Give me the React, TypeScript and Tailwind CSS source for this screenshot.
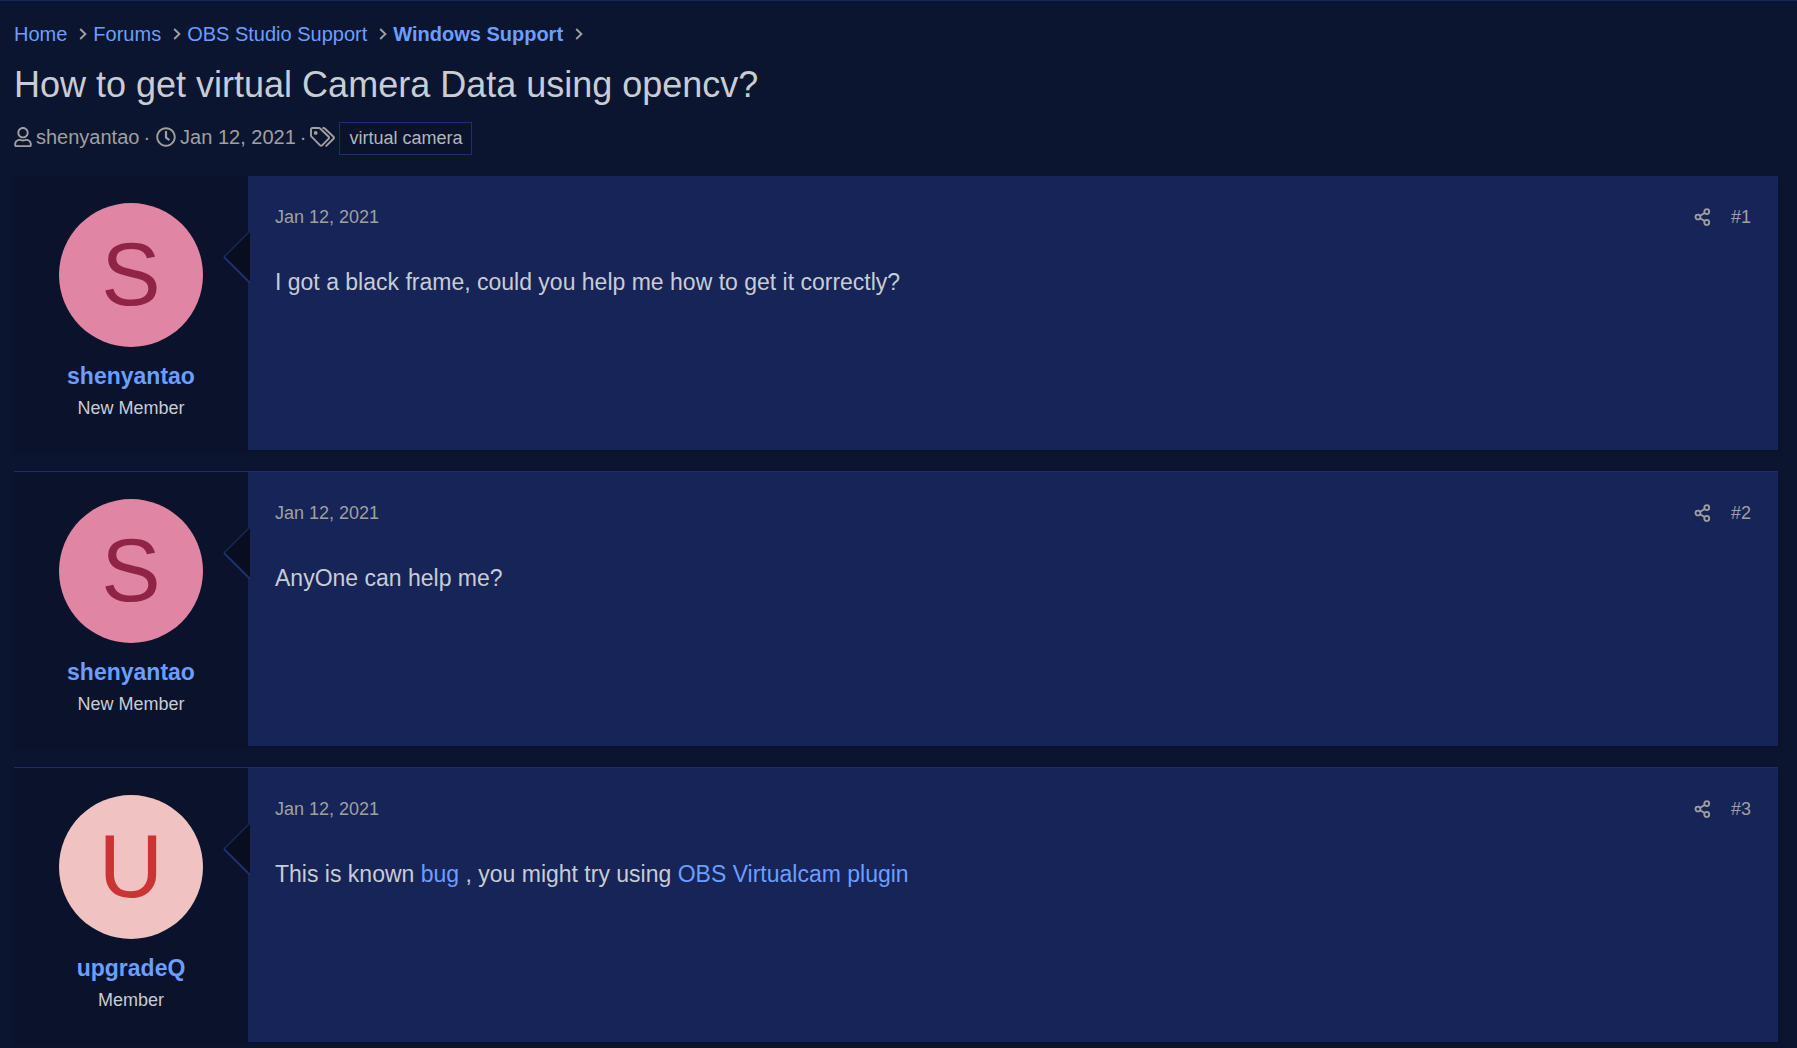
import React from "react";
import { FaRegClock, FaRegUser } from "react-icons/fa";

type Post = {
  id: number;
  author: string;
  rank: string;
  date: string;
  avatar: string;
  body: React.ReactNode;
};

const linkClass = "text-[#6b9eff] hover:underline";
const pink = "bg-[#e085a3] text-[#8f2446]";
const rose = "bg-[#f0c2c2] text-[#cc3333]";

const posts: Post[] = [
  {
    id: 1,
    author: "shenyantao",
    rank: "New Member",
    date: "Jan 12, 2021",
    avatar: pink,
    body: "I got a black frame, could you help me how to get it correctly?",
  },
  {
    id: 2,
    author: "shenyantao",
    rank: "New Member",
    date: "Jan 12, 2021",
    avatar: pink,
    body: "AnyOne can help me?",
  },
  {
    id: 3,
    author: "upgradeQ",
    rank: "Member",
    date: "Jan 12, 2021",
    avatar: rose,
    body: (
      <>
        This is known <a href="#bug" className={linkClass}>bug</a> , you might try using{" "}
        <a href="#plugin" className={linkClass}>OBS Virtualcam plugin</a>
      </>
    ),
  },
];

const crumbs = ["Home", "Forums", "OBS Studio Support", "Windows Support"];

function Chevron() {
  return (
    <svg viewBox="0 0 8 12" className="h-3 w-2" fill="none" stroke="#a0a0a0" strokeWidth="1.9" aria-hidden="true">
      <path d="M1.2 1 6.4 6 1.2 11" />
    </svg>
  );
}

function TagsIcon() {
  return (
    <svg viewBox="0 0 25 20" className="h-5 w-[25px]" fill="none" stroke="currentColor" strokeWidth="1.9" strokeLinejoin="round" aria-hidden="true">
      <path d="M1 2.3V8.6a1.6 1.6 0 0 0 .5 1.1l8.6 8.6a1.4 1.4 0 0 0 2 0l6.6-6.6a1.4 1.4 0 0 0 0-2L10.1 1.5A1.6 1.6 0 0 0 9 1H2.3A1.3 1.3 0 0 0 1 2.3Z" />
      <path d="M13.2 1h.5a1.6 1.6 0 0 1 1.1.5l8.7 8.2a1.4 1.4 0 0 1 0 2l-7.2 7.2" strokeLinecap="round" />
      <circle cx="5.7" cy="5.9" r="1.9" fill="currentColor" stroke="none" />
    </svg>
  );
}

function ShareIcon() {
  return (
    <svg viewBox="0 0 17 19" className="mb-0.5 h-[18px] w-[17px]" fill="none" stroke="currentColor" strokeWidth="1.9" aria-hidden="true">
      <circle cx="3.7" cy="9.5" r="2.6" />
      <circle cx="13" cy="3.8" r="2.6" />
      <circle cx="13" cy="15.2" r="2.6" />
      <path d="M6 8.100 10.700 5.200M6 10.900l4.700 2.900" />
    </svg>
  );
}

function PostCard({ post }: { post: Post }) {
  return (
    <article className="flex border-t border-[#1c3070] shadow-[0_2px_5px_rgba(0,0,0,0.2)] first:border-transparent">
      <section className="relative flex min-h-[274px] w-[234px] shrink-0 flex-col items-center bg-[#0a132b] pt-[27px]">
        <a
          href="#profile"
          aria-label={`${post.author} avatar`}
          className={`flex size-36 items-center justify-center rounded-full pb-0.5 text-[89px] leading-none ${post.avatar}`}
        >
          {post.author[0].toUpperCase()}
        </a>
        <h2 className="mt-3 text-[23px] leading-[34px] font-bold">
          <a href="#profile" className={linkClass}>{post.author}</a>
        </h2>
        <p className="text-[18px] leading-[30px] text-[#c8ccd4]">{post.rank}</p>
        <svg viewBox="0 0 27 54" className="absolute top-[54px] -right-0.5 h-[54px] w-[27px]" aria-hidden="true">
          <path d="M27 1 1 27l26 26Z" fill="#080e20" />
          <path d="M27 1 1 27" stroke="#182655" strokeWidth="1.5" />
          <path d="m1 27 26 26" stroke="#1c3070" strokeWidth="2" />
        </svg>
      </section>
      <section className="min-w-0 flex-1 bg-[#172457] px-[27px] pt-[27px]">
        <header className="flex items-center justify-between text-[18px] leading-[29px] text-[#a0a0a0]">
          <a href="#date">{post.date}</a>
          <div className="flex items-center gap-5">
            <button type="button" aria-label="Share"><ShareIcon /></button>
            <a href="#post">#{post.id}</a>
          </div>
        </header>
        <p className="mt-[34px] text-[23px] leading-[32px] text-[#c8ccd4]">{post.body}</p>
      </section>
    </article>
  );
}

export default function App() {
  return (
    <main className="min-h-screen border-t border-[#172457] bg-[#0c1530] pr-[19px] pb-1.5 pl-3.5 font-['Liberation_Sans',Arial,sans-serif]">
      <nav aria-label="Breadcrumb" className="pt-[18px]">
        <ol className="flex items-center text-[20px] leading-[30px]">
          {crumbs.map((name, i) => (
            <li key={name} className="flex items-center">
              <a href="#forum" className={i === 3 ? "font-bold text-[#6b9eff]" : linkClass}>{name}</a>
              <span className="pr-1.5 pl-3"><Chevron /></span>
            </li>
          ))}
        </ol>
      </nav>
      <h1 className="mt-[11px] text-[36px] leading-[50px] text-[#c8ccd4]">How to get virtual Camera Data using opencv?</h1>
      <ul className="mt-2 flex items-center text-[20px] leading-[32px] text-[#a0a0a0]">
        <li className="flex items-center gap-1">
          <FaRegUser className="h-5 w-[18px]" />
          <a href="#profile">shenyantao</a>
        </li>
        <li className="flex items-center gap-1 before:pr-0.5 before:pl-1 before:content-['·']">
          <FaRegClock className="size-5" />
          <a href="#date">Jan 12, 2021</a>
        </li>
        <li className="flex items-center gap-1 before:pl-1 before:content-['·']">
          <TagsIcon />
          <a href="#tag" className="mt-1 border border-[#1c3070] bg-[#0a132b] px-[9px] text-[18px] leading-[31px] text-[#b4b6ba]">virtual camera</a>
        </li>
      </ul>
      <div className="mt-5 flex flex-col gap-[21px]">
        {posts.map((post) => <PostCard key={post.id} post={post} />)}
      </div>
    </main>
  );
}
